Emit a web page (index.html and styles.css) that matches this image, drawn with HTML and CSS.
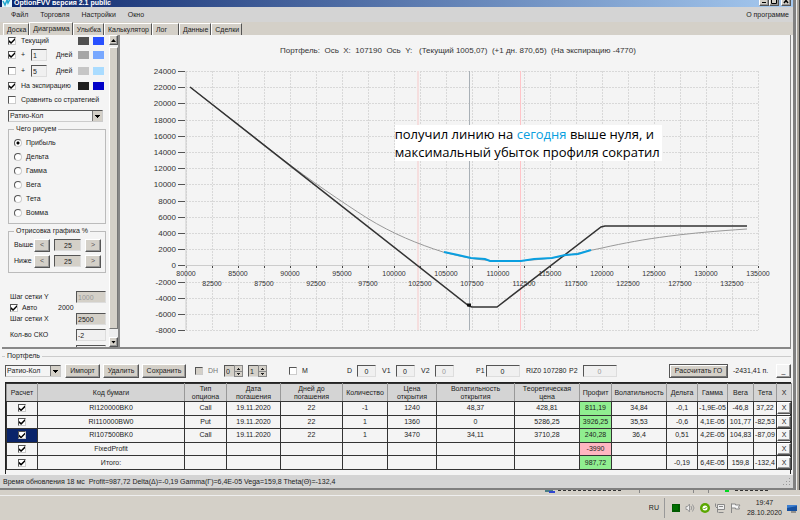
FILE: index.html
```html
<!DOCTYPE html>
<html lang="ru">
<head>
    <meta charset="UTF-8">
    <meta name="viewport" content="width=device-width, initial-scale=1.0">
    <title>OptionFVV версия 2.1 public</title>
    <link rel="stylesheet" href="styles.css">
</head>
<body>

<div class="desktop">
    <main class="window">
        <!-- Title bar -->
        <header class="titlebar">
            <svg class="app-icon" width="10" height="12" viewBox="0 0 10 12">
                <rect width="10" height="12" fill="#e8f6fb"/>
                <path d="M1 6l2 4 2-5 1 3 3-6" fill="none" stroke="#22a7cf" stroke-width="1.5"/>
            </svg>
            <span>OptionFVV версия 2.1 public</span>
            <div class="win-buttons">
                <button aria-label="Свернуть"><svg width="6" height="6" viewBox="0 0 6 6"><path d="M1 4h4v1h-4z"/></svg></button>
                <button aria-label="Развернуть"><svg width="6" height="6" viewBox="0 0 6 6"><path d="M.5.5h5v5h-5z" fill="none" stroke="#000"/></svg></button>
                <button aria-label="Закрыть"><svg width="6" height="6" viewBox="0 0 6 6"><path d="M1 0l4 5M5 0l-4 5" stroke="#000" stroke-width="1.5"/></svg></button>
            </div>
        </header>

        <nav class="menu">
            <a href="#">Файл</a>
            <a href="#">Торговля</a>
            <a href="#">Настройки</a>
            <a href="#">Окно</a>
            <a href="#" class="about">О программе</a>
        </nav>

        <div class="tabs">
            <button>Доска</button>
            <button class="active">Диаграмма</button>
            <button>Улыбка</button>
            <button>Калькулятор</button>
            <button class="short">Лог</button>
            <button>Данные</button>
            <button>Сделки</button>
        </div>

        <!-- Diagram tab -->
        <section class="content">
            <form class="side">
                <div class="line first">
                    <input type="checkbox" id="current" checked>
                    <label for="current" class="wide">Текущий</label>
                    <i class="swatch gray1"></i><i class="swatch blue1"></i>
                </div>
                <div class="line">
                    <input type="checkbox" id="plus1" checked>
                    <label for="plus1">+</label>
                    <input type="text" id="days1" value="1">
                    <label for="days1">Дней</label>
                    <i class="swatch gray2"></i><i class="swatch blue2"></i>
                </div>
                <div class="line">
                    <input type="checkbox" id="plus5">
                    <label for="plus5">+</label>
                    <input type="text" id="days5" value="5">
                    <label for="days5">Дней</label>
                    <i class="swatch gray3"></i><i class="swatch blue3"></i>
                </div>
                <div class="line low">
                    <input type="checkbox" id="expiry" checked>
                    <label for="expiry" class="wide">На экспирацию</label>
                    <i class="swatch gray4"></i><i class="swatch blue4"></i>
                </div>
                <div class="line low">
                    <input type="checkbox" id="compare">
                    <label for="compare" class="full">Сравнить со стратегией</label>
                </div>
                <select class="strategy" aria-label="Стратегия"><option>Ратио-Кол</option></select>

                <fieldset class="kind">
                    <legend>Чего рисуем</legend>
                    <label><input type="radio" name="kind" checked>Прибыль</label>
                    <label><input type="radio" name="kind">Дельта</label>
                    <label><input type="radio" name="kind">Гамма</label>
                    <label><input type="radio" name="kind">Вега</label>
                    <label><input type="radio" name="kind">Тета</label>
                    <label><input type="radio" name="kind">Вомма</label>
                </fieldset>

                <fieldset class="range">
                    <legend>Отрисовка графика %</legend>
                    <div class="range-row">
                        <label for="above">Выше</label>
                        <button type="button">&lt;</button>
                        <input type="text" id="above" value="25">
                        <button type="button">&gt;</button>
                    </div>
                    <div class="range-row">
                        <label for="below">Ниже</label>
                        <button type="button">&lt;</button>
                        <input type="text" id="below" value="25">
                        <button type="button">&gt;</button>
                    </div>
                </fieldset>

                <div class="steps">
                    <div class="step-row">
                        <label for="stepY">Шаг сетки Y</label>
                        <input type="text" id="stepY" value="1000" class="beige" disabled>
                    </div>
                    <div class="auto-row">
                        <input type="checkbox" id="auto" checked>
                        <label for="auto">Авто</label>
                        <span>2000</span>
                    </div>
                    <div class="step-row">
                        <label for="stepX">Шаг сетки X</label>
                        <input type="text" id="stepX" value="2500" class="beige">
                    </div>
                    <div class="step-row sko">
                        <label for="sko">Кол-во СКО</label>
                        <input type="text" id="sko" value="-2">
                    </div>
                    <div class="step-row sko">
                        <span></span>
                        <input type="text" aria-label="СКО">
                    </div>
                </div>
            </form>

            <div class="scrollbar">
                <button aria-label="Вверх"><i class="arrow up"></i></button>
                <div class="thumb"></div>
                <button aria-label="Вниз"><i class="arrow"></i></button>
            </div>

            <div class="chart">
                <svg id="chart" viewBox="-1 -1 670 312"></svg>
                <p class="note">получил линию на <b>сегодня</b> выше нуля, и<br>максимальный убыток профиля сократил</p>
            </div>
        </section>

        <!-- Portfolio -->
        <section class="portfolio">
            <h2>Портфель</h2>
            <div class="toolbar">
                <select aria-label="Портфель"><option>Ратио-Кол</option></select>
                <button>Импорт</button>
                <button>Удалить</button>
                <button>Сохранить</button>
                <label class="dim"><input type="checkbox">DH</label>
                <span class="spin"><input type="text" value="0" aria-label="DH от"><i></i></span>
                <span class="spin"><input type="text" value="1" aria-label="DH до"><i></i></span>
                <label><input type="checkbox">M</label>
                <label>D<input type="text" value="0"></label>
                <label>V1<input type="text" value="0"></label>
                <label>V2<input type="text" value="0" disabled></label>
                <label class="p1">P1<input type="text" value="0"></label>
                <span>RIZ0 107280</span>
                <label class="p2">P2<input type="text" value="0" disabled></label>
                <button class="calc">Рассчитать ГО</button>
                <span>-2431,41 п.</span>
                <button class="mini">_</button>
            </div>

            <div class="table-box">
                <table>
                    <colgroup>
                        <col class="w31"><col class="w147"><col class="w42"><col class="w54"><col class="w62"><col class="w45">
                        <col class="w49"><col class="w78"><col class="w65"><col class="w32"><col class="w55"><col class="w31">
                        <col class="w30"><col class="w26"><col class="w23"><col class="w15">
                    </colgroup>
                    <thead>
                        <tr>
                            <th>Расчет</th><th>Код бумаги</th><th>Тип<br>опциона</th><th>Дата<br>погашения</th>
                            <th>Дней до<br>погашения</th><th>Количество</th><th>Цена<br>открытия</th><th>Волатильность<br>открытия</th>
                            <th>Теоретическая<br>цена</th><th>Профит</th><th>Волатильность</th><th>Дельта</th>
                            <th>Гамма</th><th>Вега</th><th>Тета</th><th>X</th>
                        </tr>
                    </thead>
                    <tbody id="rows"></tbody>
                </table>
            </div>
        </section>

        <footer class="status">Время обновления 18 мс&nbsp; Profit=987,72 Delta(Δ)=-0,19 Gamma(Γ)=6,4E-05 Vega=159,8 Theta(Θ)=-132,4
            <svg width="8" height="8" viewBox="0 0 8 8" fill="#999">
                <path d="M6 0h1v1h-1zM6 3h1v1h-1zM3 3h1v1h-1zM6 6h1v1h-1zM3 6h1v1h-1zM0 6h1v1h-1z"/>
            </svg>
        </footer>
    </main>

    <!-- Part of the window behind -->
    <div class="behind">
        <svg width="12" height="3" viewBox="0 0 12 3">
            <path d="M1 0h8v2h-8z" fill="#4a7d84"/><path d="M5 1h6v2h-6z" fill="#3046d0"/>
        </svg>
        <span class="dashes"></span>
        <span class="cell first"></span><span class="cell"></span><span class="cell"></span>
        <span class="led"></span><span class="dashes short"></span>
    </div>

    <footer class="tray">
        <span class="lang">RU</span>
        <svg width="8" height="8" viewBox="0 0 8 8"><path d="M0 0h8v8h-8z" fill="#005a00"/><path d="M1 1h5v5h-5z" fill="#007000"/></svg>
        <svg width="10" height="10" viewBox="0 0 10 10" fill="none" stroke="#999"><path d="M1 3.5h1.5l2-2.5v8l-2-2.5h-1.5z" fill="#eee"/><path d="M6 3q1.5 2 0 4M7.5 1.5q3 3.5 0 7"/></svg>
        <svg width="10" height="10" viewBox="0 0 10 10"><circle cx="5" cy="5" r="5" fill="#5aa700"/><circle cx="5" cy="5" r="2.5" fill="#fff"/><path d="M3.5 5l1 1 2-2" stroke="#5aa700" fill="none"/></svg>
        <svg width="10" height="10" viewBox="0 0 10 10" fill="#eee" stroke="#888"><path d="M2.5 1.5h7v5h-7z"/><path d="M4 3.5h4M3.5 9.5h5M.5.5v3l2 2v4"/></svg>
        <svg width="11" height="10" viewBox="0 0 11 10" fill="#f6f6f6" stroke="#888"><path d="M1.5 10v-9.5M1.5 1h4v1h4.5l-1.5 2 1 2h-4v-1h-4z"/></svg>
        <time>19:47<br>28.10.2020</time>
        <svg width="10" height="9" viewBox="0 0 10 9"><path d="M0 1h10v6h-10z" fill="#3d7fd0"/><path d="M0 4l10-2v5h-10z" fill="#16509f"/><path d="M4 8h5" stroke="#555"/></svg>
    </footer>
</div>

<script src="script.js"></script>
</body>
</html>
```
FILE: styles.css
```css
* {
    box-sizing: border-box;
}

body {
    margin: 0;
    background: #d4d0c8;
    color: #222;
    font-family: "Liberation Sans", Arial, sans-serif;
    font-size: 7px;
    line-height: 10px;
}

button, input, select {
    font: inherit;
    color: inherit;
    margin: 0;
    padding: 0;
    border-radius: 0;
}

button {
    background: #d4d0c8;
    border: 1px solid;
    border-color: #fff #555 #555 #fff;
    box-shadow: inset -1px -1px #999;
    line-height: 8px;
}

a {
    color: inherit;
    text-decoration: none;
}

.desktop {
    display: flex;
    flex-direction: column;
    height: 100vh;
    overflow: hidden;
}

.window {
    flex: 1;
    min-height: 0;
    display: flex;
    flex-direction: column;
    background: #f4f4f4;
    border: solid #808080;
    border-width: 0 3px 2px 0;
    margin-right: 4px;
    box-shadow: 1px 0 #eee, 3px 0 #aaa59c, 4px 0 #444;
    padding-left: 2px;
}

/* Title bar */
.titlebar {
    display: flex;
    align-items: flex-end;
    gap: 2px;
    height: 7px;
    margin-left: -2px;
    padding-left: 2px;
    background: linear-gradient(90deg, #0a246a, #a6caf0);
    color: #fff;
    font-weight: bold;
    line-height: 8px;
}

.win-buttons {
    display: flex;
    margin-left: auto;
    margin-right: 2px;
}

.win-buttons button {
    display: grid;
    place-items: center;
    width: 10px;
    height: 10px;
    margin-bottom: 1px;
}

.win-buttons button:last-child {
    margin-left: 2px;
}

.menu {
    display: flex;
    align-items: center;
    gap: 12px;
    height: 15px;
    padding: 0 4px 0 11px;
    margin-left: -2px;
    background: #d4d4d4;
}

.menu .about {
    margin-left: auto;
}

.tabs {
    display: flex;
    align-items: flex-end;
    height: 13px;
    padding-left: 3px;
    margin-left: -2px;
    background: #d4d0c8;
}

.tabs button {
    height: 12px;
    padding: 0 2px 0 3px;
    border-bottom: 0;
    box-shadow: none;
}

.tabs .active {
    height: 13px;
}

.tabs .short {
    padding-right: 11px;
}

/* Diagram tab */
.content {
    flex: 1;
    min-height: 0;
    display: flex;
    border: solid #888;
    border-width: 0 1px 2px 0;
    margin-right: 2px;
}

.side {
    width: 107px;
    padding: 0 3px 0 6px;
    overflow: hidden;
}

.line {
    display: grid;
    grid-template-columns: 13px 10px 25px 22px 15px 11px;
    align-items: center;
    height: 16px;
}

.line.first {
    height: 12px;
}

.line.low {
    height: 14px;
}

.line .wide {
    grid-column: span 3;
}

.line .full {
    grid-column: span 5;
}

.line input[type="text"] {
    width: 16px;
}

.swatch {
    width: 11px;
    height: 8px;
}

.gray1 { background: #505050; }
.gray2 { background: #a6a6a6; }
.gray3 { background: #c6c6c6; }
.gray4 { background: #1e1e1e; }
.blue1 { background: #2850ff; }
.blue2 { background: #78a8ff; }
.blue3 { background: #aadcff; }
.blue4 { background: #0000c8; }

input[type="text"] {
    width: 19px;
    height: 12px;
    padding-left: 1px;
    background: #f0f0f0;
    border: 1px solid;
    border-color: #555 #ddd #ddd #555;
    outline: 0;
}

input:disabled {
    color: #999;
}

.side .beige {
    background: #d4d0c8;
}

input[type="checkbox"] {
    appearance: none;
    flex: none;
    width: 8px;
    height: 8px;
    background: #fff;
    border: 1px solid;
    border-color: #555 #ccc #ccc #555;
}

input[type="checkbox"]:checked::before {
    content: "";
    display: block;
    height: 6px;
    background: #000;
    clip-path: polygon(0 35%, 35% 65%, 100% 0, 100% 35%, 35% 100%, 0 70%);
}

input[type="radio"] {
    appearance: none;
    flex: none;
    width: 8px;
    height: 8px;
    background: #fff;
    border: 1px solid;
    border-color: #555 #ccc #ccc #555;
    border-radius: 50%;
}

input[type="radio"]:checked {
    background: radial-gradient(circle, #000 1px, #fff 2px);
}

select {
    appearance: none;
    width: 56px;
    height: 12px;
    padding-left: 1px;
    border: 1px solid;
    border-color: #555 #ccc #ccc #555;
    background:
        linear-gradient(#000, #000) right 2px top 4px / 5px 1px no-repeat,
        linear-gradient(#000, #000) right 3px top 5px / 3px 1px no-repeat,
        linear-gradient(#000, #000) right 4px top 6px / 1px 1px no-repeat,
        linear-gradient(#d4d0c8, #d4d0c8) right / 9px no-repeat,
        linear-gradient(#777, #777) right / 10px no-repeat,
        #f4f4f4;
}

.strategy {
    display: block;
    width: 95px;
    margin-top: 3px;
}

fieldset {
    margin: 3px 0 0;
    min-width: 0;
    border: 1px solid #bbb;
}

legend {
    padding: 0 2px;
    line-height: 8px;
}

.kind {
    padding: 3px 5px;
}

.kind label {
    display: flex;
    align-items: center;
    gap: 4px;
    height: 14px;
}

.range {
    padding: 2px 3px 3px 5px;
}

.range-row {
    display: grid;
    grid-template-columns: 20px 20px 31px 16px;
    align-items: center;
    height: 16px;
}

.range-row button {
    width: 16px;
    height: 13px;
    color: #555;
}

.range-row input[type="text"] {
    width: 27px;
    background: #d4d0c8;
    text-align: center;
}

.steps {
    margin-top: 18px;
}

.step-row {
    display: flex;
    justify-content: space-between;
    align-items: center;
    height: 12px;
    padding-left: 2px;
}

.step-row input[type="text"] {
    width: 30px;
}

.step-row.sko {
    margin-top: 4px;
}

.auto-row {
    display: grid;
    grid-template-columns: 12px 36px auto;
    align-items: center;
    height: 10px;
    padding-left: 2px;
}

.scrollbar {
    display: flex;
    flex-direction: column;
    width: 11px;
    border-right: 2px solid #888;
    background: #eee;
}

.scrollbar button {
    display: grid;
    place-items: center;
    height: 10px;
}

.thumb {
    flex: 1;
    margin: 2px 0 8px;
    background: #d4d0c8;
    border: 1px solid;
    border-color: #fff #777 #777 #fff;
}

.arrow {
    width: 5px;
    height: 3px;
    background: #000;
    clip-path: polygon(0 0, 100% 0, 50% 100%);
}

.arrow.up {
    transform: rotate(180deg);
}

/* Chart */
.chart {
    position: relative;
    flex: 1;
    min-width: 0;
}

.chart svg {
    display: block;
    width: 100%;
    height: 100%;
}

.chart .title {
    font-size: 8px;
    white-space: pre;
}

.chart .ylabel {
    font-size: 8px;
    text-anchor: end;
}

.chart .xlabel {
    font-size: 7px;
    text-anchor: middle;
}

.note {
    position: absolute;
    left: 41%;
    top: 29%;
    margin: 0;
    padding: 0 2px 0 0;
    background: #fff;
    color: #000;
    font: 13px/18px "Open Sans", sans-serif;
    white-space: nowrap;
}

.note b {
    color: #0a9fe0;
    font-weight: normal;
}

/* Portfolio */
.portfolio {
    margin: 2px 1px 0 0;
    padding: 0 1px 1px 3px;
}

.portfolio h2 {
    display: flex;
    align-items: center;
    gap: 2px;
    margin: 0 0 0 -3px;
    font-size: 7px;
    font-weight: normal;
    line-height: 10px;
}

.portfolio h2::before,
.portfolio h2::after {
    content: "";
    width: 3px;
    height: 1px;
    background: #ccc;
}

.portfolio h2::after {
    flex: 1;
}

.toolbar {
    display: grid;
    grid-template-columns: 60px 38px 39px 53px 29px 24px 41px 58px 35px 39px 55px 50px 43px 1fr 64px 43px 15px;
    align-items: center;
    height: 20px;
    margin-bottom: 1px;
}

.toolbar button {
    height: 14px;
    margin-right: 3px;
}

.toolbar button:nth-of-type(3) {
    margin-right: 9px;
}

.toolbar label {
    display: flex;
    align-items: center;
    gap: 5px;
}

.toolbar label input[type="text"] {
    text-align: center;
    padding: 0;
}

.toolbar .dim {
    color: #777;
}

.toolbar .dim input {
    background: #d4d0c8;
}

.toolbar .p1 {
    gap: 1px;
}

.toolbar .p1 input[type="text"],
.toolbar .p2 input[type="text"] {
    width: 34px;
}

.toolbar .calc {
    margin-right: 5px;
    border-color: #555;
    box-shadow: inset 1px 1px #fff, inset -1px -1px #777;
}

.toolbar .mini {
    margin: 0;
    background: #f4f4f4;
}

.spin {
    display: flex;
    width: 19px;
}

.spin input[type="text"] {
    width: 10px;
    border-right: 0;
    background: #d4d0c8;
}

.spin i {
    width: 9px;
    border: 1px solid #888;
    background:
        linear-gradient(#222, #222) 2px 3px / 3px 1px no-repeat,
        linear-gradient(#222, #222) 3px 2px / 1px 1px no-repeat,
        linear-gradient(#222, #222) 2px 7px / 3px 1px no-repeat,
        linear-gradient(#222, #222) 3px 8px / 1px 1px no-repeat,
        linear-gradient(#888, #888) 0 5px / 100% 1px no-repeat,
        #d4d0c8;
}

.table-box {
    border: solid #222;
    border-width: 1px 1px 0 1px;
    padding-bottom: 4px;
}

table {
    width: 100%;
    height: 87px;
    border-collapse: collapse;
    table-layout: fixed;
    text-align: center;
    line-height: 8px;
}

.w15 { width: 15px; }
.w23 { width: 23px; }
.w26 { width: 26px; }
.w30 { width: 30px; }
.w31 { width: 31px; }
.w32 { width: 32px; }
.w42 { width: 42px; }
.w45 { width: 45px; }
.w49 { width: 49px; }
.w54 { width: 54px; }
.w55 { width: 55px; }
.w62 { width: 62px; }
.w65 { width: 65px; }
.w78 { width: 78px; }
.w147 { width: 147px; }

th, td {
    padding: 0;
    border: 1px solid #333;
    font-weight: normal;
    white-space: nowrap;
}

th {
    height: 18px;
    background: #d4d4d4;
    border-right-color: #999;
    border-left-color: #999;
}

td input[type="checkbox"] {
    display: block;
    margin: 0 auto;
}

td button {
    display: block;
    width: 100%;
    height: 12px;
    background: #f4f4f4;
}

.selected {
    background: #0a246a;
}

.plus {
    background: #90ee90;
}

.minus {
    background: #ffb6c1;
}

/* Status bar */
.status {
    display: flex;
    align-items: center;
    justify-content: space-between;
    height: 13px;
    margin-left: -2px;
    padding: 0 2px 0 3px;
    background: #d4d4d4;
}

.behind {
    display: flex;
    height: 6px;
    padding-left: 544px;
    border-bottom: 1px solid #eee;
}

.dashes {
    width: 65px;
    margin-left: 2px;
    height: 1px;
    background: repeating-linear-gradient(90deg, #333 0 3px, transparent 3px 5px);
}

.dashes.short {
    width: 34px;
    margin-left: 6px;
}

.cell {
    width: 15px;
    height: 3px;
    border-left: 1px solid #888;
}

.cell.first {
    width: 54px;
    margin-left: 16px;
}

.led {
    width: 4px;
    height: 2px;
    margin-left: 2px;
    background: #00d820;
}

/* Taskbar */
.tray {
    display: flex;
    justify-content: flex-end;
    align-items: center;
    gap: 5px;
    height: 24px;
    padding-right: 3px;
}

.lang {
    padding-right: 5px;
    margin-right: 2px;
    border-right: 1px solid #999;
    line-height: 20px;
}

.tray time {
    margin: 0 0 0 1px;
    text-align: center;
}
```
FILE: script.js
```javascript
var svg = document.getElementById("chart");

// value -> chart coordinates
function px(v) {
    return Math.round(65 + (v - 80000) * 0.0104);
}

function py(v) {
    return Math.round(35 + (24000 - v) * 0.0081);
}

function add(name, attrs, text) {
    var el = document.createElementNS("http://www.w3.org/2000/svg", name);
    for (var key in attrs) {
        el.setAttribute(key, attrs[key]);
    }
    if (text) {
        el.textContent = text;
    }
    svg.appendChild(el);
}

function path(d, color, width, dash) {
    add("path", { d: d, fill: "none", stroke: color, "stroke-width": width, "stroke-dasharray": dash || "none" });
}

add("text", { x: 159, y: 17, "class": "title", fill: "#333" },
    "Портфель:  Ось  X:  107190  Ось  Y:   (Текущий 1005,07)  (+1 дн. 870,65)  (На экспирацию -4770)");

for (var y = -8000; y <= 24000; y += 2000) {
    path("M65 " + (py(y) + 0.5) + "H637", "#d8d8d8", 1, "2 1");
    path("M57 " + (py(y) + 0.5) + "h7", "#555", 1);
    add("text", { x: 55, y: py(y) + 3, "class": "ylabel", fill: "#333" }, String(y));
}

for (var x = 80000; x <= 135000; x += 2500) {
    path("M" + (px(x) + 0.5) + " 35V294", "#d8d8d8", 1, "2 1");
    path("M" + (px(x) + 0.5) + " 230v2", "#444", 1);
}

path("M65 229.5H637", "#ccc", 1);
path("M65 35V294", "#ccc", 1);

// price and deviation markers
path("M297 35V294", "#f5dede", 2);
path("M348.5 35V294", "#a9b0b6", 1);
path("M399.5 35V294", "#ffc4c8", 1);

for (x = 80000; x <= 135000; x += 2500) {
    add("text", { x: px(x), y: x % 5000 ? 250 : 240, "class": "xlabel", fill: "#333" }, String(x));
}

// current profile, expiry profile, today highlight
path("M69 51L160 122C190 145 221 166 246 182C272 198 297 208 322 216C345 222 360 225 385 225C430 225 456 217 481 212C525 202 565 197 626 193", "#999", 1);
path("M69 51L348 270L351 271H376L480 191L484 190H626", "#333", 1.5);
path("M323 216L337 219L350 222L364 223L369 225H400L413 223L431 222L444 219L457 218L470 214", "#0a9fe0", 2);
path("M346 269h4", "#111", 3);

// portfolio rows
var rows = [
    ["RI120000BK0", "Call", "19.11.2020", "22", "-1", "1240", "48,37", "428,81", "811,19", "34,84", "-0,1", "-1,9E-05", "-46,8", "37,22"],
    ["RI110000BW0", "Put", "19.11.2020", "22", "1", "1360", "0", "5286,25", "3926,25", "35,53", "-0,6", "4,1E-05", "101,77", "-82,53"],
    ["RI107500BK0", "Call", "19.11.2020", "22", "1", "3470", "34,11", "3710,28", "240,28", "36,4", "0,51", "4,2E-05", "104,83", "-87,09"],
    ["FixedProfit", "", "", "", "", "", "", "", "-3990", "", "", "", "", ""],
    ["Итого:", "", "", "", "", "", "", "", "987,72", "", "-0,19", "6,4E-05", "159,8", "-132,4"]
];

var html = "";
rows.forEach(function (row, n) {
    html += "<tr><td" + (n == 2 ? ' class="selected"' : "") + '><input type="checkbox" checked aria-label="' + row[0] + '"></td>';
    row.forEach(function (value, i) {
        var cls = i == 8 ? (value[0] == "-" ? ' class="minus"' : ' class="plus"') : "";
        html += "<td" + cls + ">" + value + "</td>";
    });
    html += "<td><button>X</button></td></tr>";
});
document.getElementById("rows").innerHTML = html;
```
